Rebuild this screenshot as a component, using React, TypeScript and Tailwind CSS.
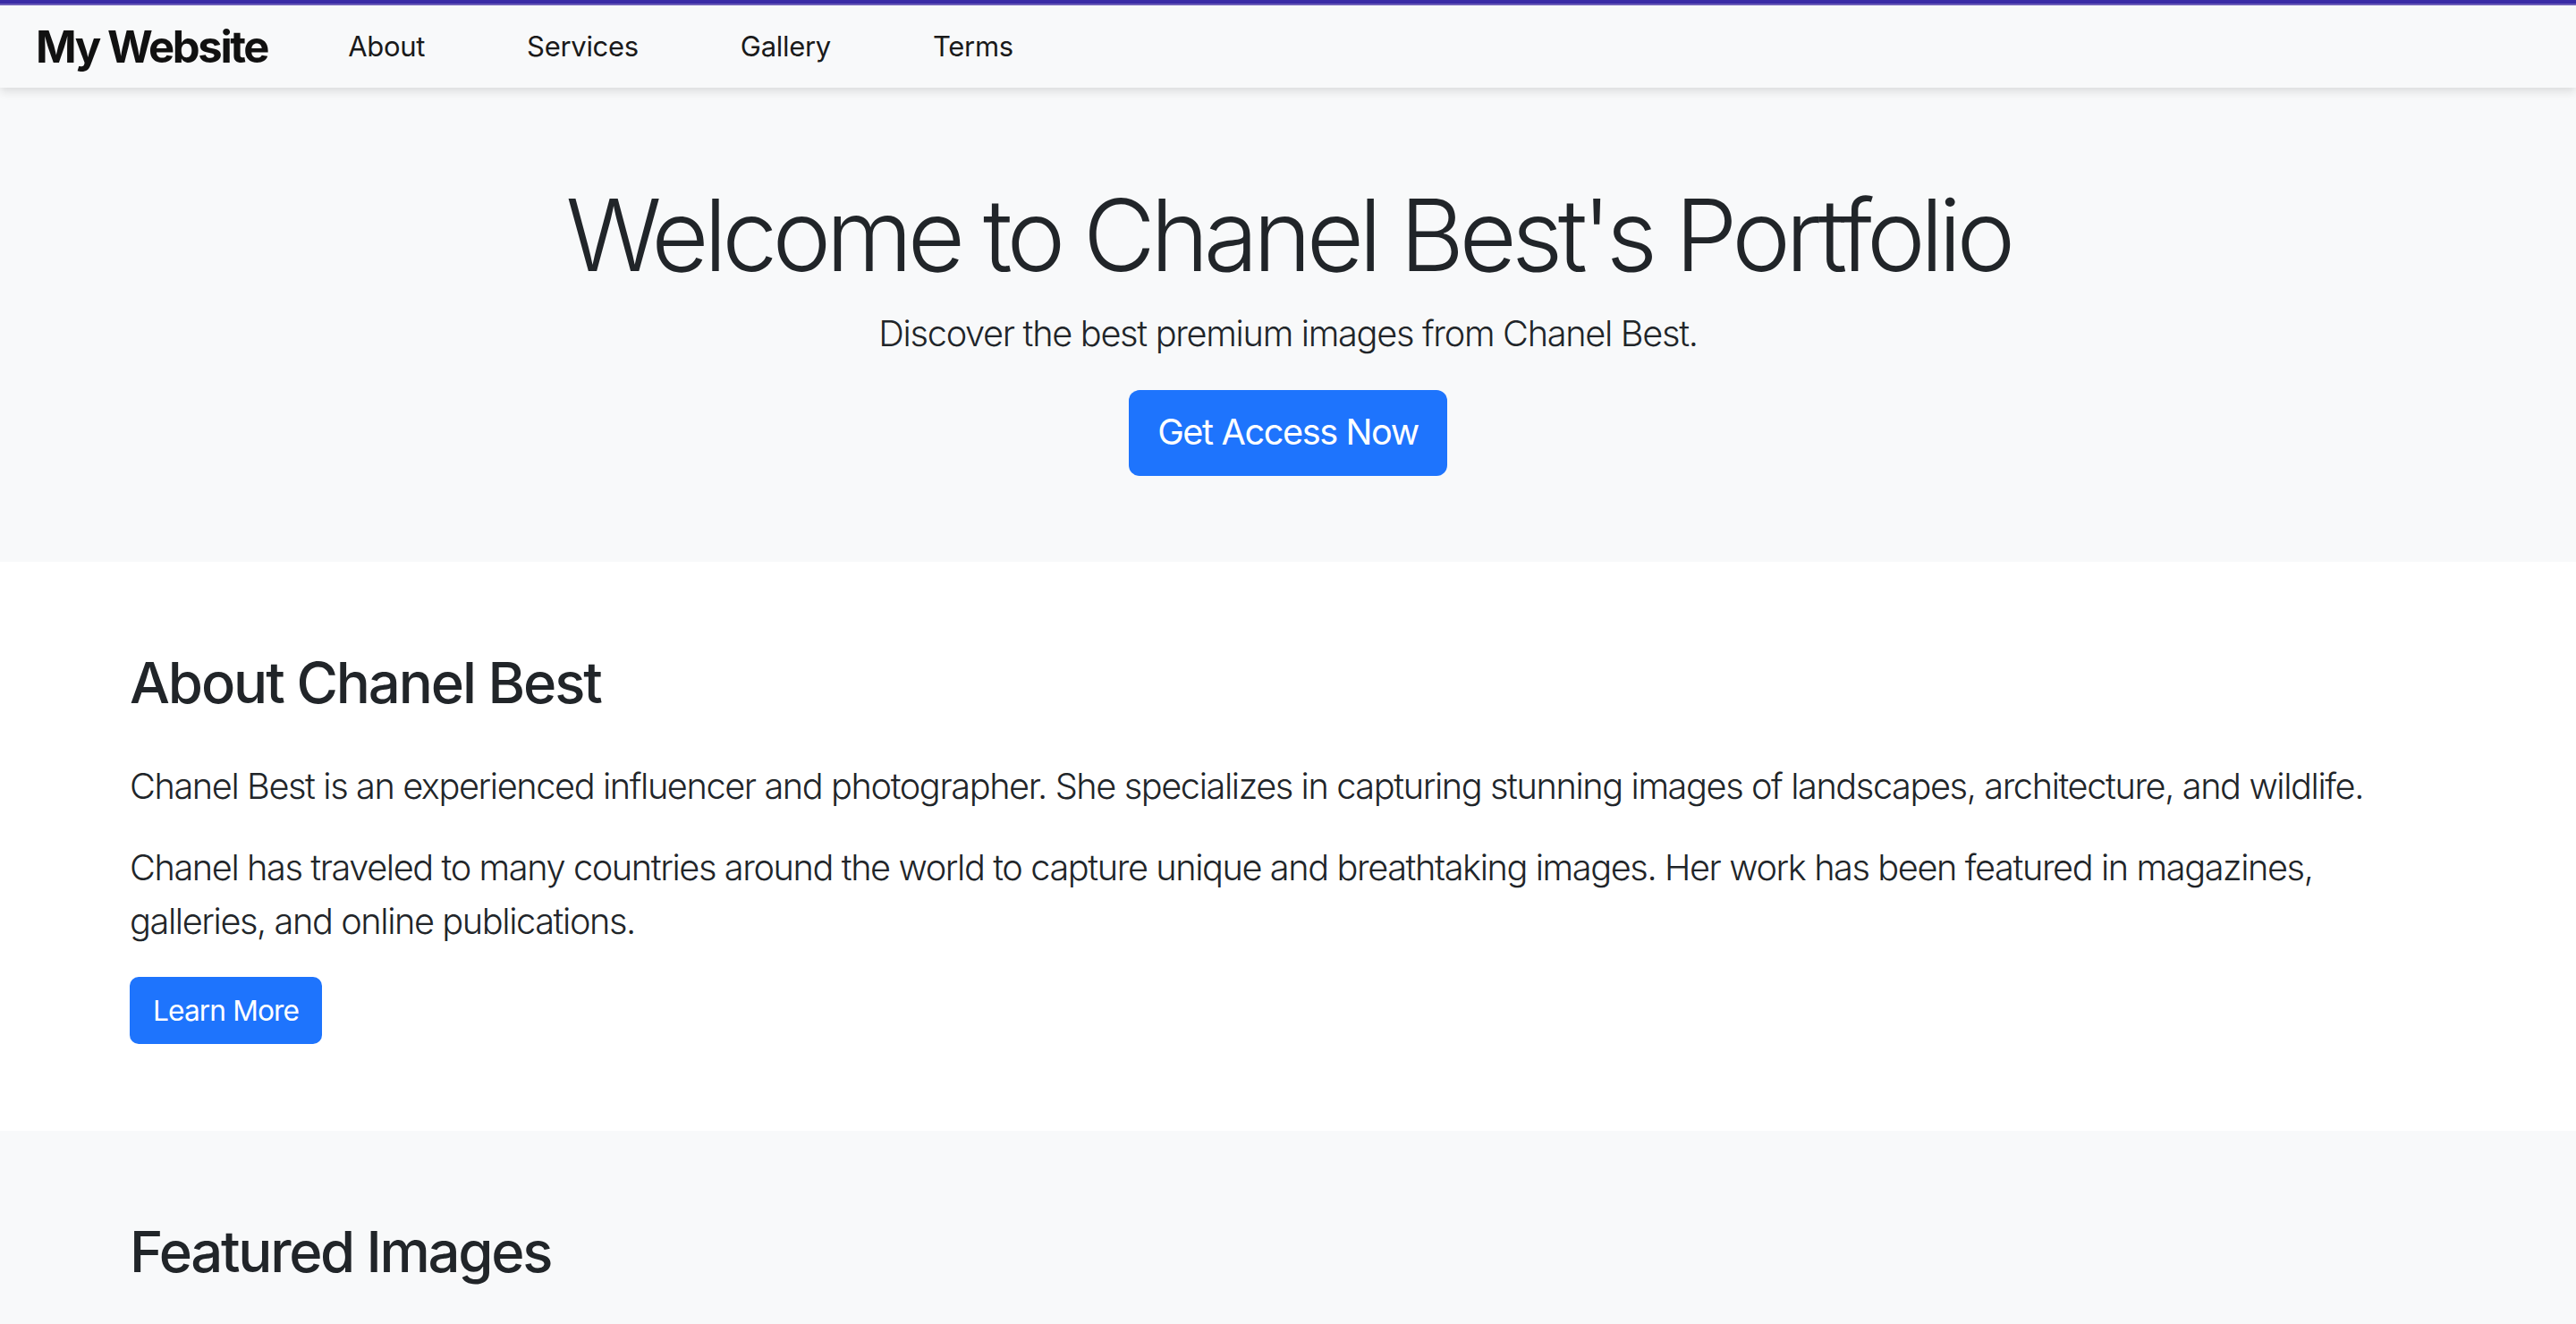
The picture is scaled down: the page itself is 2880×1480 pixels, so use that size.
import React from "react";

const links = ["About", "Services", "Gallery", "Terms"];

function Navbar() {
  return (
    <nav className="relative z-10 bg-[#f8f9fa] shadow-[0_4px_10px_rgba(0,0,0,0.12)]">
      <div className="h-[4px] bg-[#3a2ca6]" />
      <div className="h-[2px] bg-[#6b5cb8]" />
      <div className="flex h-[92px] items-center px-[40px]">
        <a className="text-[49px] font-bold leading-none tracking-[-2.4px] text-[#111111]">My Website</a>
        <ul className="ml-[90px] flex items-center gap-[114px]">
          {links.map((l) => (
            <li key={l}>
              <a className="text-[31px] leading-none tracking-[-0.3px] text-[#1a1a1a]">{l}</a>
            </li>
          ))}
        </ul>
      </div>
    </nav>
  );
}

function Hero() {
  return (
    <header className="bg-[#f8f9fa] pt-[98px] pb-[96px] text-center">
      <h1 className="mb-[15px] text-[111px] font-light leading-[1.2] tracking-[-5.7px] text-[#212529]">
        Welcome to Chanel Best's Portfolio
      </h1>
      <p className="mb-[32px] text-[39.7px] font-light leading-[1.5] tracking-[-1.3px] text-[#212529]">
        Discover the best premium images from Chanel Best.
      </p>
      <button className="h-[96px] rounded-[12px] bg-[#1e74fd] px-[32px] text-[39.7px] font-normal tracking-[-1.4px] text-white">
        Get Access Now
      </button>
    </header>
  );
}

function About() {
  return (
    <section className="bg-white px-[145px] pt-[97px] pb-[97px]">
      <h2 className="mb-[49px] text-[63.4px] font-medium leading-[1.2] tracking-[-2.1px] text-[#212529]">
        About Chanel Best
      </h2>
      <p className="mb-[32px] text-[39.7px] font-light leading-[1.5] tracking-[-1.4px] text-[#212529]">
        Chanel Best is an experienced influencer and photographer. She specializes in capturing stunning images of
        landscapes, architecture, and wildlife.
      </p>
      <p className="mb-[32px] max-w-[2560px] text-[39.7px] font-light leading-[1.5] tracking-[-1.4px] text-[#212529]">
        Chanel has traveled to many countries around the world to capture unique and breathtaking images. Her work has
        been featured in magazines, galleries, and online publications.
      </p>
      <button className="h-[75px] rounded-[10px] bg-[#1e74fd] px-[26px] text-[31.7px] font-normal tracking-[-0.9px] text-white">
        Learn More
      </button>
    </section>
  );
}

function Featured() {
  return (
    <section className="min-h-[300px] bg-[#f8f9fa] px-[145px] pt-[97px]">
      <h2 className="text-[63.4px] font-medium leading-[1.2] tracking-[-2.3px] text-[#212529]">Featured Images</h2>
    </section>
  );
}

export default function App() {
  return (
    <div className="min-h-screen bg-white font-['Inter',sans-serif]">
      <Navbar />
      <Hero />
      <About />
      <Featured />
    </div>
  );
}
